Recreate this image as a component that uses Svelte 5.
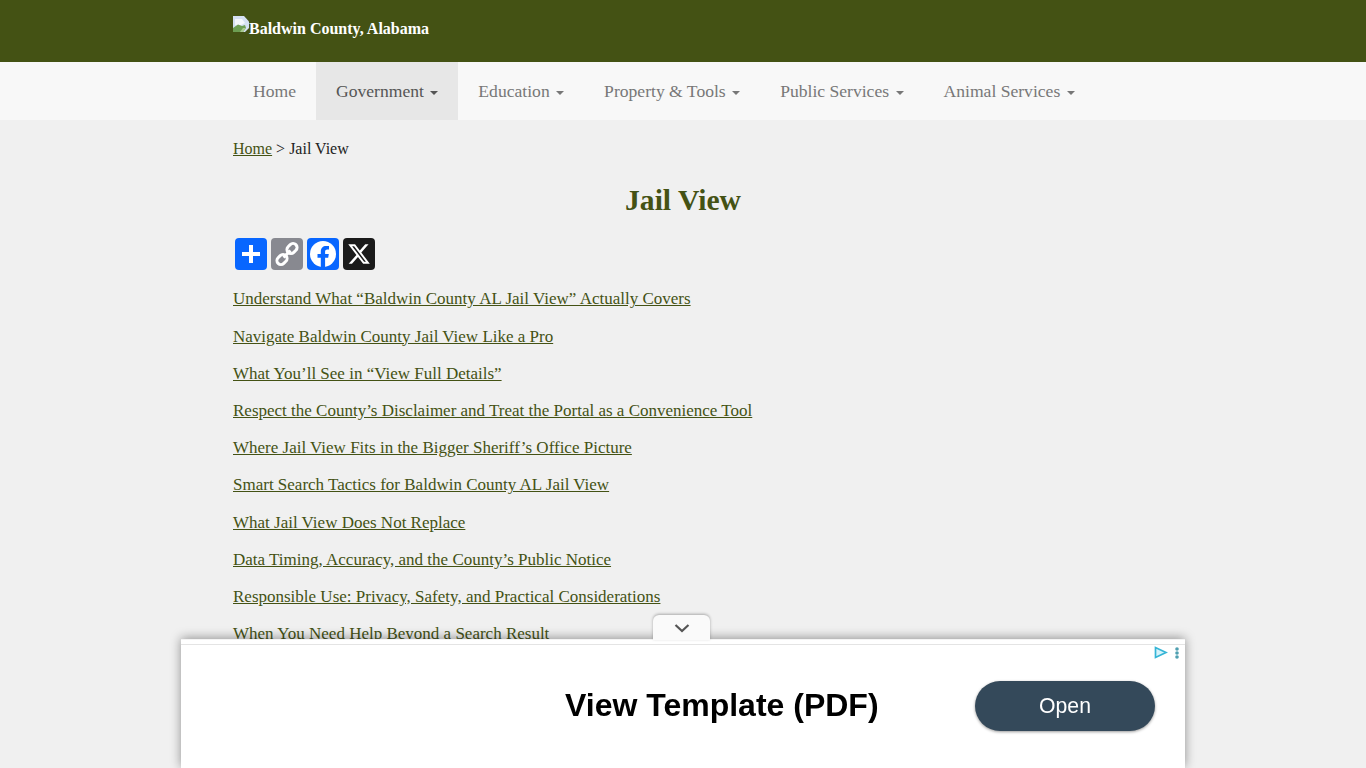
<script>
  const menu = [
    { label: 'Home' },
    { label: 'Government', caret: true, active: true },
    { label: 'Education', caret: true },
    { label: 'Property & Tools', caret: true },
    { label: 'Public Services', caret: true },
    { label: 'Animal Services', caret: true }
  ];
  const links = [
    'Understand What “Baldwin County AL Jail View” Actually Covers',
    'Navigate Baldwin County Jail View Like a Pro',
    'What You’ll See in “View Full Details”',
    'Respect the County’s Disclaimer and Treat the Portal as a Convenience Tool',
    'Where Jail View Fits in the Bigger Sheriff’s Office Picture',
    'Smart Search Tactics for Baldwin County AL Jail View',
    'What Jail View Does Not Replace',
    'Data Timing, Accuracy, and the County’s Public Notice',
    'Responsible Use: Privacy, Safety, and Practical Considerations',
    'When You Need Help Beyond a Search Result'
  ];
</script>

<header class="site-header">
  <div class="container brand">
    <svg class="broken" width="16" height="16" viewBox="0 0 16 16">
      <path d="M0 0h11l5 5.500V12l-4 4H0z" fill="#d5e0f2" />
      <path d="M2 3h7l3 4-6 3-4-1z" fill="#f4f7fb" />
      <path d="M0 16v-4l5-3.500 4 1.500 3-1 1 3-3 4z" fill="#6d9e52" />
      <path d="M7 16l3-4 3 0-3 4z" fill="#a9c98f" />
    </svg>
    <a href="#home" class="brand-name">Baldwin County, Alabama</a>
  </div>
</header>

<nav class="navbar">
  <ul class="container nav">
    {#each menu as item}
      <li class:active={item.active}>
        <a href="#menu">{item.label}{#if item.caret}{' '}<span class="caret"></span>{/if}</a>
      </li>
    {/each}
  </ul>
</nav>

<main class="container">
  <p class="crumbs"><a href="#home">Home</a> &gt; Jail View</p>
  <h1>Jail View</h1>
  <div class="share">
    <span class="btn blue">
      <svg viewBox="0 0 32 32" width="32" height="32"><path fill="#fff" d="M14 7h4v7h7v4h-7v7h-4v-7H7v-4h7z" /></svg>
    </span>
    <span class="btn grey">
      <svg viewBox="0 0 32 32" width="32" height="32" fill="none" stroke="#fff" stroke-width="3">
        <rect x="15.500" y="6.500" width="11" height="8" rx="4" transform="rotate(-45 21 10.500)" />
        <rect x="5.500" y="17.500" width="11" height="8" rx="4" transform="rotate(-45 11 21.500)" />
        <path d="M12.500 19.500l7-7" />
      </svg>
    </span>
    <span class="btn blue">
      <svg viewBox="0 0 32 32" width="32" height="32">
        <circle cx="16" cy="16" r="13" fill="#fff" />
        <path fill="#0866ff" d="M13.800 29v-9.200h-3.300V16h3.300v-2.500c0-3.700 2.200-5.600 5.300-5.600 1.500 0 2.900.2 2.900.2v3.300h-1.700c-1.700 0-2.200 1-2.200 2.100V16h3.700l-.6 3.800h-3.100V29z" />
      </svg>
    </span>
    <span class="btn black">
      <svg viewBox="-4 -4 32 32" width="32" height="32">
        <path fill="#fff" d="M18.244 2.250h3.308l-7.227 8.260 8.502 11.240H16.170l-5.214-6.817L4.990 21.750H1.680l7.730-8.835L1.254 2.250H8.080l4.713 6.231zm-1.161 17.520h1.833L7.084 4.126H5.117z" />
      </svg>
    </span>
  </div>
  <ul class="toc">
    {#each links as text}
      <li><a href="#section">{text}</a></li>
    {/each}
  </ul>
</main>

<aside class="ad">
  <button class="ad-toggle" aria-label="Collapse">
    <svg width="16" height="9" viewBox="0 0 16 9" fill="none" stroke="#555" stroke-width="2.200"><path d="M1.500 1l6.500 6 6.500-6" /></svg>
  </button>
  <div class="ad-marks">
    <svg width="14" height="13" viewBox="0 0 14 13" fill="#d6f3fb" stroke="#35b5d6" stroke-width="1.700"><path d="M1.500 1.500v10l10.500-5z" /></svg>
    <svg width="4" height="12" viewBox="0 0 4 12" fill="#4f9fb0"><circle cx="2" cy="2" r="1.800" /><circle cx="2" cy="6" r="1.800" /><circle cx="2" cy="10" r="1.800" /></svg>
  </div>
  <div class="ad-body">
    <strong>View Template (PDF)</strong>
    <span class="open">Open</span>
  </div>
</aside>

<style>
  :global(body) {
    background: #f0f0f0;
    font-family: "Liberation Serif", "Times New Roman", serif;
    font-size: 16px;
    color: #222;
    height: 768px;
    overflow: hidden;
  }
  .container {
    width: 900px;
    margin: 0 auto;
  }
  .site-header {
    background: #445214;
    height: 62px;
  }
  .brand {
    display: flex;
    align-items: flex-start;
    padding-top: 16px;
  }
  .broken {
    flex: none;
  }
  .brand-name {
    color: #fff;
    font-weight: bold;
    font-size: 16px;
    text-decoration: none;
    margin-top: 4px;
    line-height: 18px;
  }
  .navbar {
    background: #f8f8f8;
    height: 58px;
  }
  .nav {
    display: flex;
    list-style: none;
    padding: 0;
    height: 58px;
  }
  .nav a {
    display: block;
    padding: 0 20px;
    line-height: 58px;
    font-size: 17.600px;
    color: #777;
    text-decoration: none;
  }
  .nav .active a {
    background: #e7e7e7;
    color: #555;
  }
  .caret {
    display: inline-block;
    margin-left: 2px;
    vertical-align: middle;
    border-top: 4px solid;
    border-left: 4px solid transparent;
    border-right: 4px solid transparent;
  }
  .crumbs {
    margin: 0;
    padding-top: 20px;
    line-height: 18px;
  }
  a {
    color: #445214;
  }
  h1 {
    margin: 26px 0 0;
    text-align: center;
    font-size: 29.600px;
    line-height: 33px;
    color: #445214;
  }
  .share {
    display: flex;
    gap: 4px;
    padding: 21px 2px 0;
  }
  .btn {
    width: 32px;
    height: 32px;
    border-radius: 4px;
    display: block;
  }
  .btn svg {
    display: block;
  }
  .blue {
    background: #0866ff;
  }
  .grey {
    background: #888990;
  }
  .black {
    background: #1a1a1a;
  }
  .toc {
    list-style: none;
    margin: 0;
    padding: 20.400px 0 0;
    display: flex;
    flex-direction: column;
    gap: 19.200px;
    font-size: 17px;
  }
  .toc li {
    line-height: 18px;
  }
  .ad {
    position: fixed;
    left: 181px;
    right: 181px;
    bottom: 0;
    height: 128px;
    background: #fff;
    border-top: 1px solid #f4f4f4;
    box-shadow: 0 -1px 10px rgba(0, 0, 0, 0.4);
    font-family: "Liberation Sans", Arial, sans-serif;
  }
  .ad::before {
    content: "";
    display: block;
    height: 4px;
    border-bottom: 1px solid #e4e4e4;
  }
  .ad-toggle {
    position: absolute;
    top: -25px;
    left: 472px;
    width: 57px;
    height: 25px;
    padding: 2px 0 0;
    border: 0;
    border-radius: 6px 6px 0 0;
    background: #fafafa;
    box-shadow: 0 -1px 3px rgba(0, 0, 0, 0.3);
  }
  .ad-marks {
    position: absolute;
    top: 6px;
    right: 6px;
    display: flex;
    gap: 7px;
    align-items: center;
  }
  .ad-body {
    display: flex;
    align-items: center;
    height: 120px;
    padding: 0 30px 0 384px;
    justify-content: space-between;
  }
  .ad-body strong {
    font-size: 32px;
    color: #000;
  }
  .open {
    width: 180px;
    height: 50px;
    margin-top: 2px;
    border-radius: 25px;
    background: #34495a;
    color: #fff;
    font-size: 21.200px;
    line-height: 50px;
    text-align: center;
    box-shadow: 0 1px 3px rgba(0, 0, 0, 0.4);
  }
</style>
